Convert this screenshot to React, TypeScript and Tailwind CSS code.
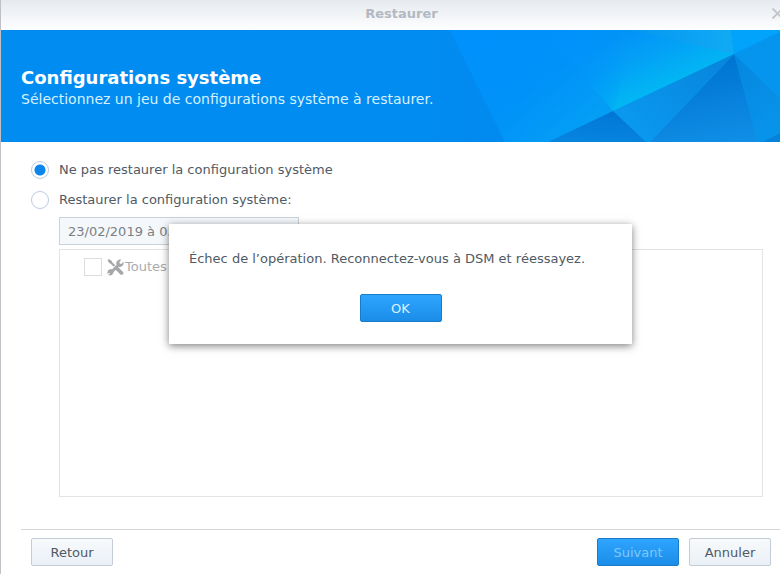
import { useState } from "react";
import type { ButtonHTMLAttributes } from "react";

interface ActionButtonProps extends ButtonHTMLAttributes<HTMLButtonElement> {
  primary?: boolean;
}

function ActionButton({ primary = false, children, ...rest }: ActionButtonProps) {
  return (
    <button
      type="button"
      className={`h-7 w-[82px] rounded-[2px] border pt-px text-center bg-linear-to-b ${
        primary
          ? "border-[#1a7cc8] from-[#2ea5ff] to-[#1a8de8] text-[#dff2ff] disabled:text-[#7fc8fc]"
          : "border-[#c3cbd6] from-[#f8fafc] to-[#e9f0f6] text-[#505a64]"
      }`}
      {...rest}
    >
      {children}
    </button>
  );
}

function BannerArt() {
  return (
    <svg
      className="absolute right-0 top-0 h-full"
      viewBox="0 0 350 112"
      preserveAspectRatio="xMaxYMid meet"
      aria-hidden="true"
    >
      <defs>
        <linearGradient id="base" gradientUnits="userSpaceOnUse" x1="60" y1="0" x2="150" y2="112">
          <stop offset="0" stopColor="#0091fc" />
          <stop offset="0.5" stopColor="#0092f9" />
          <stop offset="1" stopColor="#04a0f4" />
        </linearGradient>
        <linearGradient id="left" gradientUnits="userSpaceOnUse" x1="0" y1="0" x2="65" y2="0">
          <stop offset="0" stopColor="#018cf1" />
          <stop offset="0.6" stopColor="#028af0" />
          <stop offset="1" stopColor="#018bee" />
        </linearGradient>
        <linearGradient id="glow" gradientUnits="userSpaceOnUse" x1="192" y1="4" x2="218" y2="65">
          <stop offset="0" stopColor="#0294f7" />
          <stop offset="0.4" stopColor="#039ff6" />
          <stop offset="1" stopColor="#02b7f3" />
        </linearGradient>
        <linearGradient id="fade" gradientUnits="userSpaceOnUse" x1="110" y1="0" x2="200" y2="0">
          <stop offset="0" stopColor="#0092fb" />
          <stop offset="0.3" stopColor="#0092fb" stopOpacity="0.8" />
          <stop offset="1" stopColor="#0092fb" stopOpacity="0" />
        </linearGradient>
        <linearGradient id="top" gradientUnits="userSpaceOnUse" x1="205" y1="0" x2="300" y2="10">
          <stop offset="0" stopColor="#0698f2" />
          <stop offset="1" stopColor="#10aaf4" />
        </linearGradient>
        <linearGradient id="wing" gradientUnits="userSpaceOnUse" x1="290" y1="26" x2="210" y2="100">
          <stop offset="0" stopColor="#0786dc" />
          <stop offset="1" stopColor="#0a97ee" />
        </linearGradient>
        <linearGradient id="deep" gradientUnits="userSpaceOnUse" x1="290" y1="34" x2="305" y2="112">
          <stop offset="0" stopColor="#0076d2" />
          <stop offset="1" stopColor="#108ee6" />
        </linearGradient>
        <linearGradient id="foot" x1="0.6" y1="0" x2="0.4" y2="1">
          <stop offset="0" stopColor="#0076d6" />
          <stop offset="1" stopColor="#0784e0" />
        </linearGradient>
        <linearGradient id="side" x1="0" y1="0" x2="0.4" y2="1">
          <stop offset="0" stopColor="#0586de" />
          <stop offset="1" stopColor="#0893ea" />
        </linearGradient>
      </defs>
      <rect width="350" height="112" fill="url(#base)" />
      <path d="M0 0H20L42 45L75 112H0Z" fill="url(#left)" />
      <path d="M115 0H207L304 24L183 81Z" fill="url(#glow)" />
      <path d="M115 0H207L183 81Z" fill="url(#fade)" />
      <path d="M200 0H301L304 24Z" fill="url(#top)" />
      <path d="M301 0H350V2L304 24Z" fill="#02a3fb" />
      <path d="M304 24L350 2V68Z" fill="#0594ee" />
      <path d="M304 24L350 68V112H328Z" fill="url(#side)" />
      <path d="M304 24L328 112H220Z" fill="url(#deep)" />
      <path d="M304 24L220 112H215L183 81Z" fill="url(#wing)" />
      <path d="M183 81L216 112H118Z" fill="url(#foot)" />
      <path d="M333 112L350 103V112Z" fill="#0582da" />
    </svg>
  );
}

function ToolsIcon() {
  return (
    <svg className="size-[17px]" viewBox="0 0 17 17" fill="none" aria-hidden="true">
      <path d="M2.5 2L7.5 7" stroke="#a5a7a9" strokeWidth="2.2" />
      <path d="M10 9.5L14.5 14" stroke="#a5a7a9" strokeWidth="3.8" strokeLinecap="round" />
      <path d="M.5 1.5L2 0L4.8 2L4.8 4.3L2.5 4.3Z" fill="#a5a7a9" />
      <path d="M3 14.5L11.5 6" stroke="#a5a7a9" strokeWidth="3" />
      <path
        d="M14.5 .6L12.4 2.9L12.8 4.5L14.3 4.9L16.5 2.8C17.4 5.9 15 8.6 12 7.9L9.3 5.2C8.7 2.1 11.5 -.4 14.5 .6Z"
        fill="#a5a7a9"
      />
      <path
        d="M6.8 11L6.3 14C5.5 16.4 3 17 1.2 16.1L3.4 14L2.9 13.1L.6 15C-.1 12.4 1.2 10.4 3.7 9.9Z"
        fill="#a5a7a9"
      />
    </svg>
  );
}

const radioClass =
  "size-[18px] appearance-none rounded-full border border-[#bccbe0] bg-white checked:bg-[radial-gradient(circle,#0a86ec_0_5px,#ffffff_6px)]";

export default function App() {
  const [restore, setRestore] = useState(false);
  const [showError, setShowError] = useState(true);

  return (
    <div className="relative flex min-h-screen flex-col overflow-hidden border-l border-[#bfc1c6] bg-white font-['DejaVu_Sans',Verdana,sans-serif] text-[13px] leading-[18px] text-[#505a64]">
      {/* Title bar */}
      <div className="relative flex h-[30px] items-center justify-center bg-linear-to-b from-[#e6eaef] to-[#fdfeff] pb-0.5 pl-[22px]">
        <h1 className="font-bold text-[#b2b9c2]">Restaurer</h1>
        <button type="button" aria-label="Fermer" className="absolute -right-1 top-[7px] text-[#c0c5cb]">
          <svg className="size-[13px]" viewBox="0 0 13 13" fill="none" stroke="currentColor" strokeWidth="1.8">
            <path d="M1.5 1.5L11.5 11.5M11.5 1.5L1.5 11.5" />
          </svg>
        </button>
      </div>

      {/* Banner */}
      <header className="relative h-28 overflow-hidden bg-[#018cf1] px-5 pt-9">
        <BannerArt />
        <div className="relative">
          <h2 className="text-[18px] leading-[23px] font-bold text-white">Configurations système</h2>
          <p className="text-[14px] leading-5 text-[#d5f1ff]">
            Sélectionnez un jeu de configurations système à restaurer.
          </p>
        </div>
      </header>

      <main className="flex flex-1 flex-col pt-[19px] pr-[17px] pb-8 pl-[30px]">
        <label className="flex items-center gap-2.5">
          <input
            type="radio"
            name="mode"
            className={radioClass}
            checked={!restore}
            onChange={() => setRestore(false)}
          />
          Ne pas restaurer la configuration système
        </label>
        <label className="mt-3 flex items-center gap-2.5">
          <input
            type="radio"
            name="mode"
            className={radioClass}
            checked={restore}
            onChange={() => setRestore(true)}
          />
          Restaurer la configuration système:
        </label>

        <div className="mt-2 ml-7 flex flex-1 flex-col gap-1">
          <select
            aria-label="Jeu de configurations"
            disabled={!restore}
            className="h-7 w-60 appearance-none border border-[#c9d1da] bg-[#f4f8fb] px-2 pt-px text-[#7b8085]"
          >
            <option>23/02/2019 à 03</option>
          </select>
          <div className="flex-1 border border-[#e1e4e7] px-6 pt-2">
            <label className="flex items-center text-[#a8abae]">
              <input
                type="checkbox"
                disabled={!restore}
                className="mr-[5px] size-[18px] appearance-none border border-[#dbdee1] bg-white"
              />
              <ToolsIcon />
              <span className="pl-px">Toutes</span>
            </label>
          </div>
        </div>
      </main>

      <footer className="ml-5 flex gap-2.5 border-t border-[#d4d7da] pt-2 pr-[9px] pb-2 pl-2.5">
        <div className="flex-1">
          <ActionButton>Retour</ActionButton>
        </div>
        <ActionButton primary disabled>
          Suivant
        </ActionButton>
        <ActionButton>Annuler</ActionButton>
      </footer>

      {/* Error message */}
      {showError && (
        <div className="absolute inset-0 flex items-center justify-center pb-1.5 pl-5">
          <div
            role="alertdialog"
            aria-describedby="error-text"
            className="w-[463px] bg-white px-5 pt-[26px] pb-[22px] shadow-[0_2px_8px_rgba(0,0,0,0.5)]"
          >
            <p id="error-text">Échec de l’opération. Reconnectez-vous à DSM et réessayez.</p>
            <div className="mt-[26px] flex justify-center">
              <ActionButton primary onClick={() => setShowError(false)}>
                OK
              </ActionButton>
            </div>
          </div>
        </div>
      )}
    </div>
  );
}
